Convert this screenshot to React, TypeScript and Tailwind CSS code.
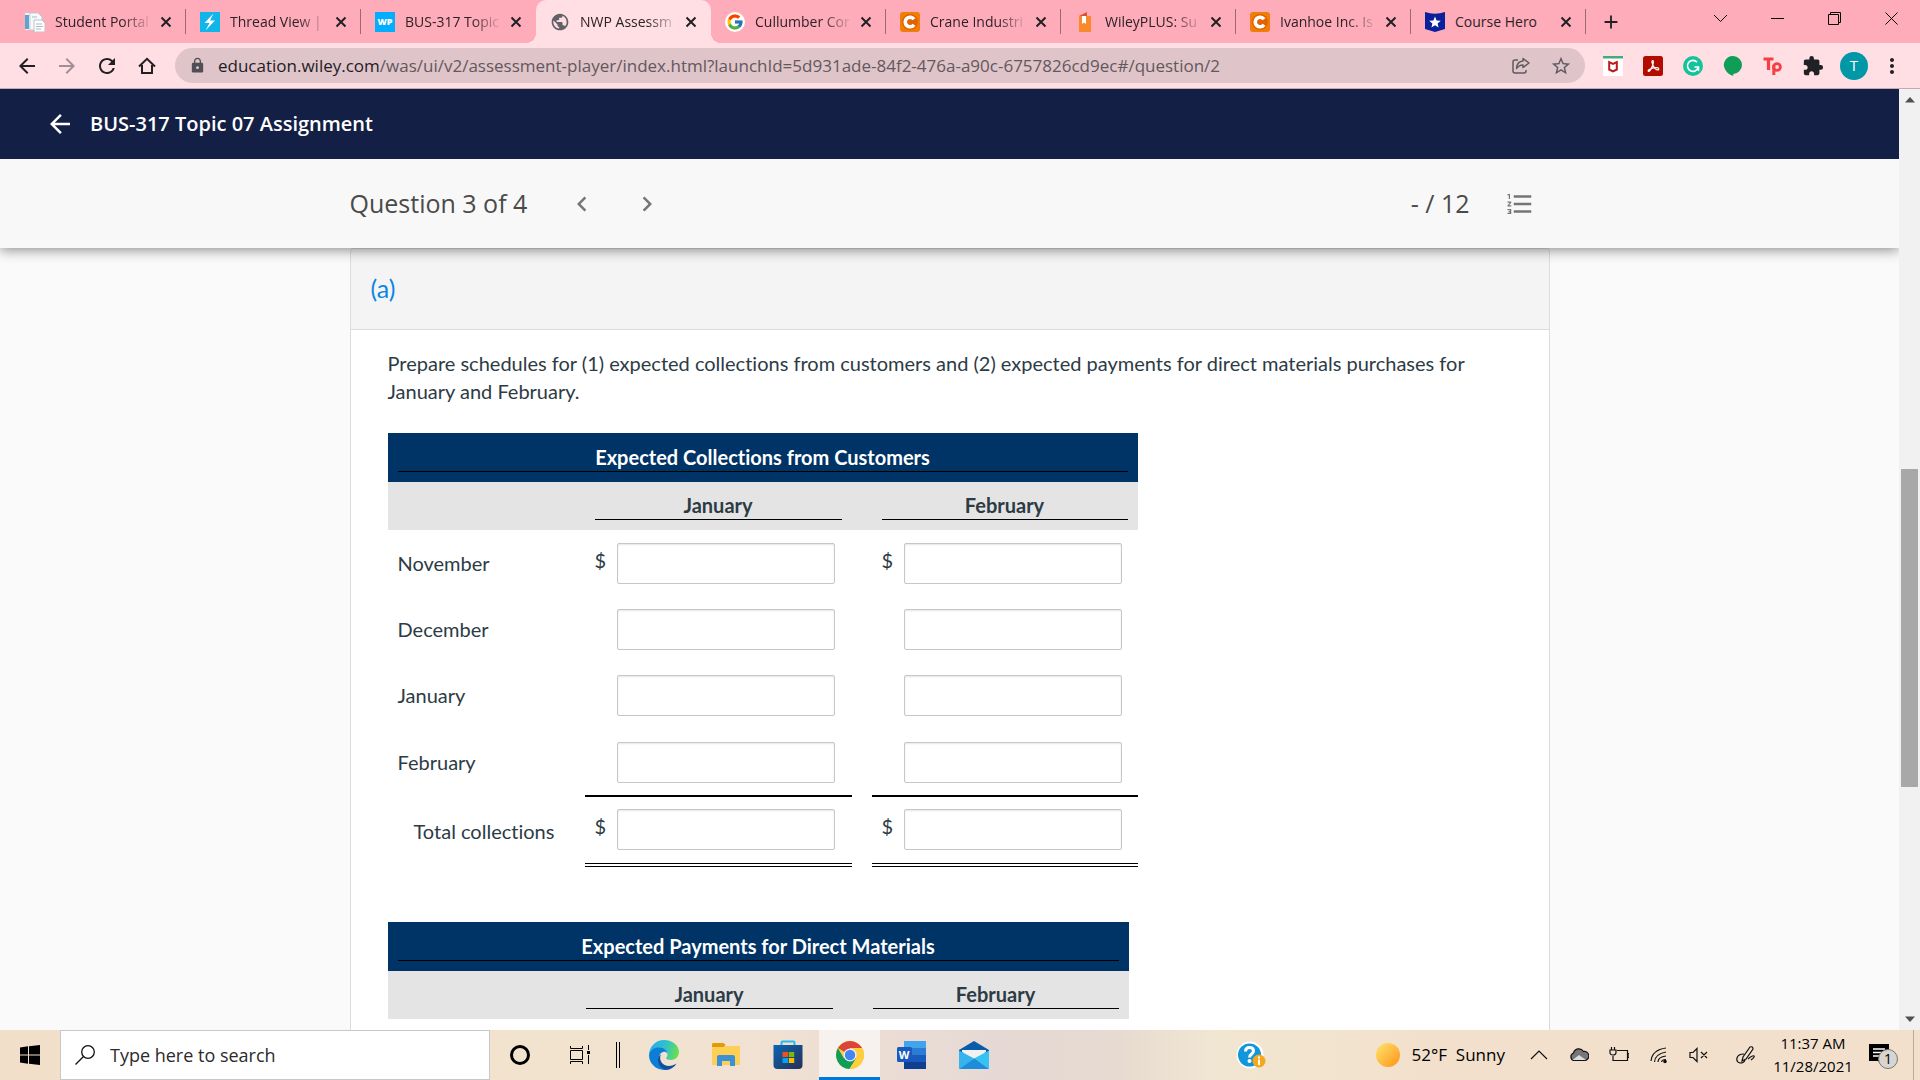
import type { ReactNode } from "react";
import clsx from "clsx";
import { FcGoogle } from "react-icons/fc";
import {
  MdAdd,
  MdArrowBack,
  MdArrowForward,
  MdChevronLeft,
  MdChevronRight,
  MdExtension,
  MdFormatListNumbered,
  MdLock,
  MdMoreVert,
  MdPublic,
  MdRefresh,
  MdStarBorder,
} from "react-icons/md";

const PortalIcon = () => (
  <svg viewBox="0 0 20 20" className="w-5 h-5">
    <path d="M0 1h12v17H0z" fill="#e9f1f6" />
    <path d="M0 3h4v14H0z" fill="#5fa3cf" />
    <path d="M5 1h8l4 4v13H5z" fill="#f7fafb" stroke="#b9c8cf" strokeWidth="0.8" />
    <path d="M9 8h8l3 3v9H9z" fill="#fff" stroke="#a8b7bd" strokeWidth="0.8" />
    <path d="M11 12h6M11 14.500h7M11 17h5M7 5h5" stroke="#9db2bb" strokeWidth="0.9" />
  </svg>
);

const ThreadIcon = () => (
  <svg viewBox="0 0 20 20" className="w-5 h-5">
    <path d="M0 0h20v20H0z" fill="#11b5ea" />
    <path d="M13.500 1.500 4.500 11h5L5.500 18.500 15 8.500h-5z" fill="#fff" />
  </svg>
);

const WpIcon = () => (
  <span className="w-5 h-5 flex items-center justify-center bg-[#04aeff] text-white text-[9px] font-extrabold">
    WP
  </span>
);

const CheggIcon = () => (
  <svg viewBox="0 0 20 20" className="w-5 h-5">
    <rect width="20" height="20" rx="3" fill="#f07d05" />
    <circle cx="10" cy="10" r="8" fill="#e06303" />
    <path d="M14 7.300A4.800 4.800 0 1 0 14 12.700" fill="none" stroke="#fff" strokeWidth="3.600" />
  </svg>
);

const BookIcon = () => (
  <svg viewBox="0 0 20 20" className="w-5 h-5">
    <path d="M4 4 12 0v4z" fill="#d9532c" />
    <path d="M4 4h12v16H4z" fill="#f98a2c" />
    <path d="M7 4h4v8l-2-1.500L7 12z" fill="#fff" />
  </svg>
);

const HeroIcon = () => (
  <svg viewBox="0 0 20 20" className="w-5 h-5">
    <path d="M0 0q10 3.500 20 0v17l-10 3L0 17z" fill="#0a1f9c" />
    <path d="m10 4.500 1.600 3.900 4.200.3-3.200 2.700 1 4.100-3.600-2.200-3.600 2.200 1-4.100-3.200-2.700 4.200-.3z" fill="#fff" />
  </svg>
);

const TabClose = () => (
  <svg viewBox="0 0 12 12" className="w-3 h-3" stroke="#202124" strokeWidth="2">
    <path d="m1.500 1.500 9 9m0-9-9 9" />
  </svg>
);

const tabs: { title: string; icon: ReactNode; active?: boolean }[] = [
  { title: "Student Portal", icon: <PortalIcon /> },
  { title: "Thread View |", icon: <ThreadIcon /> },
  { title: "BUS-317 Topic", icon: <WpIcon /> },
  {
    title: "NWP Assessm",
    icon: <MdPublic className="w-5 h-5 text-[#5f6368]" />,
    active: true,
  },
  {
    title: "Cullumber Cor",
    icon: (
      <span className="w-5 h-5 rounded-full bg-white flex items-center justify-center">
        <FcGoogle className="w-[18px] h-[18px]" />
      </span>
    ),
  },
  { title: "Crane Industri", icon: <CheggIcon /> },
  { title: "WileyPLUS: Su", icon: <BookIcon /> },
  { title: "Ivanhoe Inc. Is", icon: <CheggIcon /> },
  { title: "Course Hero", icon: <HeroIcon /> },
];

const TabStrip = () => (
  <div className="flex h-[43px] bg-[#ffacba] pl-[11px] overflow-hidden">
    <div className="flex flex-1 min-w-0">
      {tabs.map((tab, i) => (
        <div
          key={tab.title}
          className={clsx(
            "relative flex items-center w-[175px] shrink pl-3.5 pr-1.5",
            tab.active && "bg-[#ffdee4] rounded-t-[10px]"
          )}
        >
          <span className="shrink-0">{tab.icon}</span>
          <a
            href="#tab"
            className={clsx(
              "ml-2.5 w-[98px] whitespace-nowrap text-sm text-[#2b2226]",
              tab.title !== "Course Hero" &&
                "[mask-image:linear-gradient(to_right,#000_68%,transparent)]"
            )}
          >
            {tab.title}
          </a>
          <button aria-label={`Close ${tab.title}`} className="ml-[7px] shrink-0">
            <TabClose />
          </button>
          {!tab.active && i !== 2 && (
            <span className="absolute right-0 top-[9px] h-[25px] w-px bg-[#9c6a73]" />
          )}
          {tab.active && (
            <>
              <span className="absolute -left-2.5 bottom-0 w-2.5 h-2.5 bg-[radial-gradient(circle_at_0_0,#ffacba_10px,#ffdee4_10px)]" />
              <span className="absolute -right-2.5 bottom-0 w-2.5 h-2.5 bg-[radial-gradient(circle_at_100%_0,#ffacba_10px,#ffdee4_10px)]" />
            </>
          )}
        </div>
      ))}
      <button aria-label="New tab" className="ml-3.5 text-[#202124]">
        <MdAdd className="w-[22px] h-[22px]" />
      </button>
    </div>
    <div className="flex h-[37px] text-black">
      {[
        ["Search tabs", "m1 4 6.500 6.500L14 4"],
        ["Minimize", "M1 7.500h13"],
        ["Restore", "M1.500 3.500h10v10h-10zM3.500 3.500v-2h10v10h-2"],
        ["Close", "m1.500 1.500 12 12m0-12-12 12"],
      ].map(([label, d]) => (
        <button key={label} aria-label={label} className="w-[57px] flex items-center justify-center">
          <svg viewBox="0 0 15 15" className="w-[15px] h-[15px]" fill="none" stroke="currentColor">
            <path d={d} />
          </svg>
        </button>
      ))}
    </div>
  </div>
);

const extensions: { label: string; icon: ReactNode }[] = [
  {
    label: "McAfee",
    icon: (
      <svg viewBox="0 0 20 20" className="w-5 h-5">
        <path d="M0 0h20v20H0z" fill="#fff" />
        <path d="M0 0h20v2.500H0z" fill="#42ab82" />
        <path d="M6.200 6.200 10 8l3.800-1.800v7.300L10 15.300l-3.800-1.800z" fill="none" stroke="#c01818" strokeWidth="2" />
      </svg>
    ),
  },
  {
    label: "Acrobat",
    icon: (
      <svg viewBox="0 0 20 20" className="w-5 h-5">
        <rect width="20" height="20" rx="2.500" fill="#b30b00" />
        <path
          d="M9.700 4.500c-1.200 0-.8 2.600.2 4.700.9 1.900 3.300 4.600 5 4.600 1.300 0 1.300-1.900-.8-2.100-2.700-.2-6.500.9-7.800 1.700-2 1.300-1.200 2.300-.2 1.800 1.200-.7 2.600-3.300 3.500-5.700.7-2.100 1.200-5 .1-5z"
          fill="none"
          stroke="#fff"
          strokeWidth="1.200"
        />
      </svg>
    ),
  },
  {
    label: "Grammarly",
    icon: (
      <svg viewBox="0 0 20 20" className="w-5 h-5">
        <circle cx="10" cy="10" r="10" fill="#15c39a" />
        <path d="M14 6.100A5.500 5.500 0 1 0 15.200 11.500" fill="none" stroke="#fff" strokeWidth="1.600" />
        <path d="M11.500 11h4v4" fill="none" stroke="#fff" strokeWidth="1.600" />
      </svg>
    ),
  },
  {
    label: "Hangouts",
    icon: (
      <svg viewBox="0 0 20 20" className="w-5 h-5">
        <path d="M10 0a9 9 0 1 1 0 18h.3v2Q5 18.500 2.400 14A9 9 0 0 1 10 0z" fill="#109d58" />
      </svg>
    ),
  },
  {
    label: "Teachers Pay",
    icon: (
      <svg viewBox="0 0 20 20" className="w-5 h-5" fill="none" stroke="#f83e42">
        <path d="M.5 3h10M5.500 3v11" strokeWidth="3.200" />
        <circle cx="14" cy="11" r="3.400" strokeWidth="2.800" />
        <path d="M10.800 9v10" strokeWidth="3" />
      </svg>
    ),
  },
  { label: "Extensions", icon: <MdExtension className="w-[22px] h-[22px] text-[#202124]" /> },
];

const Toolbar = () => (
  <div className="flex items-center h-[46px] bg-[#ffdee4] border-b border-[#c2abb2] pl-[7px] pr-4">
    <button aria-label="Back" className="w-10 flex justify-center text-[#202124]">
      <MdArrowBack className="w-6 h-6" />
    </button>
    <button aria-label="Forward" className="w-10 flex justify-center text-[#a08f95]">
      <MdArrowForward className="w-6 h-6" />
    </button>
    <button aria-label="Reload" className="w-10 flex justify-center text-[#202124]">
      <MdRefresh className="w-6 h-6" />
    </button>
    <button aria-label="Home" className="w-10 flex justify-center">
      <svg viewBox="0 0 18 18" className="w-[18px] h-[18px]" fill="none" stroke="#202124" strokeWidth="2">
        <path d="M1 9.500 9 1.800l8 7.700M4 8v8h10V8" />
      </svg>
    </button>
    <div className="flex flex-1 items-center h-[35px] ml-2 pl-3 pr-3 rounded-full bg-[#dfc4ca]">
      <MdLock className="w-[17px] h-[17px] ml-0.5 mr-3 text-[#4f4f55]" />
      <a href="#address" className="flex-1 whitespace-nowrap text-[17px] text-[#63585c]">
        <span className="text-[#231c1f]">education.wiley.com</span>
        /was/ui/v2/assessment-player/index.html?launchId=5d931ade-84f2-476a-a90c-6757826cd9ec#/question/2
      </a>
      <button aria-label="Share" className="w-10 flex justify-center">
        <svg viewBox="0 0 20 20" className="w-5 h-5" fill="none" stroke="#5f5b60" strokeWidth="1.500">
          <path d="M7 4H4a2 2 0 0 0-2 2v9a2 2 0 0 0 2 2h9a2 2 0 0 0 2-2v-1" />
          <path d="M12 2.500 18 7l-6 4.500V9Q8 9 5.500 12.500 6 5.500 12 5z" strokeLinejoin="round" />
        </svg>
      </button>
      <button aria-label="Bookmark" className="w-10 -mr-2 flex justify-center text-[#5f5b60]">
        <MdStarBorder className="w-[22px] h-[22px]" />
      </button>
    </div>
    <div className="flex items-center ml-2">
      {extensions.map((ext) => (
        <button key={ext.label} aria-label={ext.label} className="w-10 flex justify-center">
          {ext.icon}
        </button>
      ))}
      <button className="w-7 h-7 ml-[7px] rounded-full bg-[#0097a7] text-white text-[15px]">T</button>
      <button aria-label="Menu" className="ml-3 text-[#202124]">
        <MdMoreVert className="w-6 h-6" />
      </button>
    </div>
  </div>
);

const AmountField = ({ label, dollar }: { label: string; dollar?: boolean }) => (
  <label className="flex items-start pl-2.5">
    <span className="w-[22px] pt-[3px] leading-7">{dollar ? "$" : ""}</span>
    <input
      type="text"
      aria-label={label}
      className="w-[218px] h-[41px] px-2 rounded-[2px] border border-[#c7c7c7] bg-white shadow-[inset_0_1px_2px_rgba(0,0,0,0.1)]"
    />
  </label>
);

const ScheduleHead = ({ title }: { title: string }) => (
  <thead>
    <tr className="bg-[#003366] text-white">
      <th colSpan={4} className="p-2.5">
        <div className="border-b border-black leading-7">{title}</div>
      </th>
    </tr>
    <tr className="bg-[#e4e4e4]">
      <td />
      <th className="p-2.5">
        <div className="border-b border-black leading-[27px]">January</div>
      </th>
      <td />
      <th className="p-2.5">
        <div className="border-b border-black leading-[27px]">February</div>
      </th>
    </tr>
  </thead>
);

const rows = [
  { label: "November", dollar: true },
  { label: "December" },
  { label: "January" },
  { label: "February", subtotal: true },
  { label: "Total collections", dollar: true, total: true },
];

const CollectionsTable = () => (
  <table className="table-fixed w-[750px] border-collapse">
    <colgroup>
      <col className="w-[197px]" />
      <col className="w-[267px]" />
      <col className="w-5" />
      <col className="w-[266px]" />
    </colgroup>
    <ScheduleHead title="Expected Collections from Customers" />
    <tbody>
      {rows.map((row) => {
        const cell = clsx(
          "align-top",
          row.total && "pt-3 pb-[13px] border-b-4 border-double border-black",
          row.subtotal && "pt-3.5 pb-3 border-b-2 border-black",
          !row.total && !row.subtotal && "pt-[13px] pb-3"
        );
        return (
          <tr key={row.label}>
            <th scope="row" className={clsx("text-left font-normal", row.total ? "pl-[26px]" : "pl-2.5")}>
              {row.label}
            </th>
            <td className={cell}>
              <AmountField label={`${row.label}, January`} dollar={row.dollar} />
            </td>
            <td />
            <td className={cell}>
              <AmountField label={`${row.label}, February`} dollar={row.dollar} />
            </td>
          </tr>
        );
      })}
    </tbody>
  </table>
);

const PaymentsTable = () => (
  <table className="table-fixed w-[741px] mt-[55px] border-collapse">
    <colgroup>
      <col className="w-[188px]" />
      <col className="w-[267px]" />
      <col className="w-5" />
      <col className="w-[266px]" />
    </colgroup>
    <ScheduleHead title="Expected Payments for Direct Materials" />
  </table>
);

const Page = () => (
  <div className="flex flex-col flex-1 min-w-0 overflow-hidden bg-[#fafafa] font-['Open_Sans',sans-serif]">
    <header className="relative z-10 flex items-center h-[70px] shrink-0 pl-[45px] bg-[#141f45] text-white">
      <button aria-label="Back to course">
        <MdArrowBack className="w-[30px] h-[30px]" />
      </button>
      <h1 className="ml-[15px] text-xl font-semibold">BUS-317 Topic 07 Assignment</h1>
    </header>
    <div className="relative shrink-0 h-[89px] bg-[#f8f8f8] text-[#4a4a4a] shadow-[0_2px_12px_rgba(0,0,0,0.45)]">
      <div className="flex items-center h-full w-full max-w-[1200px] mx-auto">
        <h2 className="text-[25px]">Question 3 of 4</h2>
        <button aria-label="Previous question" className="ml-10 text-[#757575]">
          <MdChevronLeft className="w-[30px] h-[30px]" />
        </button>
        <button aria-label="Next question" className="ml-[35px] text-[#757575]">
          <MdChevronRight className="w-[30px] h-[30px]" />
        </button>
        <span className="ml-auto text-[25px]">- / 12</span>
        <button aria-label="Question list" className="ml-[35px] mr-[15px] text-[#757575]">
          <MdFormatListNumbered className="w-[30px] h-[30px]" />
        </button>
      </div>
    </div>
    <main className="flex-1 min-h-0 w-full max-w-[1200px] mx-auto overflow-hidden rounded-t border-x border-t border-[#dcdcdc] bg-white font-['Lato',sans-serif] text-[#2d3b45] [font-variant-ligatures:none]">
      <h3 className="h-[81px] flex items-center pl-5 bg-[#f4f4f4] border-b border-[#dcdcdc] text-[25px] text-[#0b87e3]">
        (a)
      </h3>
      <div className="pl-[37px] pr-9 pt-[19px] text-xl">
        <p className="mb-7 leading-7">
          Prepare schedules for (1) expected collections from customers and (2) expected payments for direct
          materials purchases for January and February.
        </p>
        <CollectionsTable />
        <PaymentsTable />
      </div>
    </main>
  </div>
);

const ScrollBar = () => (
  <div className="flex flex-col items-center w-[21px] py-2 bg-[#f1f1f1]">
    <svg viewBox="0 0 10 6" className="w-2.5 h-1.5" fill="#505050">
      <path d="M5 0 10 5.500H0z" />
    </svg>
    <div className="grow-[8]" />
    <div className="w-[17px] h-[318px] bg-[#a8a8a8]" />
    <div className="grow-[5]" />
    <svg viewBox="0 0 10 6" className="w-2.5 h-1.5" fill="#505050">
      <path d="M0 .5h10L5 6z" />
    </svg>
  </div>
);

const EdgeIcon = () => (
  <svg viewBox="0 0 30 30" className="w-[30px] h-[30px]">
    <defs>
      <linearGradient id="edgeTop" x1="0" y1="0.300" x2="1" y2="0.500">
        <stop offset="0" stopColor="#2aa9ee" />
        <stop offset="0.550" stopColor="#2fc3c9" />
        <stop offset="1" stopColor="#6be04a" />
      </linearGradient>
    </defs>
    <path d="M0 15A15 15 0 0 1 15 0c9 0 15 6 15 12 0 5-4 8-8 8-3 0-5-1-5-2 1-1 1.500-2 1.500-3.500C18.500 11 15 8 10.500 8 5 8 1 11 0 15z" fill="url(#edgeTop)" />
    <path d="M0 15c1-5 5-7.500 10-7.500 5 0 8 3 8.500 6-1-1.500-3-2-4.500-1.500-3 1-4.500 4-4 8 .7 5 4 8.500 9 9.300-1.300.5-2.700.7-4 .7A15 15 0 0 1 0 15z" fill="#0c7ed6" />
    <path d="M12 14.500c-1.500 2.500-1 6 1 8.500 3.500 4 10 3.500 14.500.500C25.500 27 21.500 30 17 30c-5-1-8-6-8-10 0-2.500 1-4.500 3-5.500z" fill="#144f9f" />
  </svg>
);

const FolderIcon = () => (
  <svg viewBox="0 0 28 24" className="w-7 h-6">
    <path d="M0 1.500Q0 0 1.500 0h10L13.500 3H28v19H0z" fill="#fdcf55" />
    <path d="M0 1.500Q0 0 1.500 0h10l2 2-2 2H0z" fill="#e19a08" />
    <path d="M5 14q0-2 2-2h14q2 0 2 2v9h-5v-5h-8v5H5z" fill="#3b91d4" />
  </svg>
);

const StoreIcon = () => (
  <svg viewBox="0 0 30 30" className="w-[30px] h-[30px]">
    <defs>
      <linearGradient id="storeBag" x1="0" y1="0" x2="1" y2="1">
        <stop offset="0" stopColor="#0a66b2" />
        <stop offset="1" stopColor="#262f58" />
      </linearGradient>
    </defs>
    <path d="M8.500 6V2.500a1 1 0 0 1 1-1h11a1 1 0 0 1 1 1V6" fill="none" stroke="#2bb8f0" strokeWidth="2" />
    <path d="M.5 5h29v20a4 4 0 0 1-4 4h-21a4 4 0 0 1-4-4z" fill="url(#storeBag)" />
    <path d="M9.500 12H15v5H9.500z" fill="#f25022" />
    <path d="M15.800 12h5.400v5h-5.400z" fill="#7fba00" />
    <path d="M9.500 18H15v5H9.500z" fill="#00a4ef" />
    <path d="M15.800 18h5.400v5h-5.400z" fill="#ffb900" />
  </svg>
);

const ChromeIcon = () => (
  <svg viewBox="0 0 28 28" className="w-7 h-7">
    <circle cx="14" cy="14" r="14" fill="#ffcd40" />
    <path d="M14 14 1.900 7A14 14 0 0 1 26.100 7H14z" fill="#db4437" />
    <path d="M1.900 7A14 14 0 0 0 13.500 28l6.500-10.500-6-3.500-6 3.500z" fill="#0f9d58" />
    <path d="m20 17.500-6.500 10.500A14 14 0 0 0 26.100 7H14z" fill="#ffcd40" />
    <circle cx="14" cy="14" r="6.500" fill="#f1f1f1" />
    <circle cx="14" cy="14" r="5.200" fill="#4285f4" />
  </svg>
);

const WordIcon = () => (
  <span className="relative block w-[30px] h-7">
    <svg viewBox="0 0 30 28" className="w-[30px] h-7">
      <path d="M7 0h22v7H7z" fill="#41a5ee" />
      <path d="M7 7h22v7H7z" fill="#2b7cd3" />
      <path d="M7 14h22v7H7z" fill="#185abd" />
      <path d="M7 21h22v7H7z" fill="#103f91" />
      <rect y="6" width="15" height="15" rx="1.500" fill="#185abd" />
    </svg>
    <span className="absolute left-0 top-1.5 w-[15px] text-center text-[11px] leading-[15px] font-bold text-white">
      W
    </span>
  </span>
);

const MailIcon = () => (
  <svg viewBox="0 0 30 28" className="w-[30px] h-7">
    <path d="M0 9 15 0l15 9v3H0z" fill="#0a5ba8" />
    <path d="M3 9h24v2L15 19 3 11z" fill="#f2f2f2" />
    <path d="M0 9.500 16 18 0 28z" fill="#35b4ee" />
    <path d="M30 9.500V28L15 17.500z" fill="#35c3f3" />
    <path d="M0 28h30L15.500 17.500z" fill="#1b8ddb" />
  </svg>
);

const pinned = [
  { label: "Edge", icon: <EdgeIcon /> },
  { label: "File Explorer", icon: <FolderIcon /> },
  { label: "Store", icon: <StoreIcon /> },
  { label: "Chrome", icon: <ChromeIcon />, active: true },
  { label: "Word", icon: <WordIcon /> },
  { label: "Mail", icon: <MailIcon /> },
];

const trayIcons: { label: string; icon: ReactNode }[] = [
  { label: "Show hidden icons", icon: <path d="m2 14 8-8 8 8" /> },
  {
    label: "OneDrive",
    icon: (
      <>
        <path d="M4.500 15.500a4 4 0 0 1 0-7.500 5.500 5.500 0 0 1 10-1.500 4.500 4.500 0 0 1 1.500 9z" fill="#777" />
        <path d="m3.500 15 6.500-5 7 5z" fill="#ddd" stroke="none" />
      </>
    ),
  },
  {
    label: "Battery",
    icon: <path d="M8 5.500h10.500v10H4V11M18.500 8.500H20v4h-1.500M2.500 2v3m3-3v3M1 5h6v2.500q0 2.500-3 2.500T1 7.500z" />,
  },
  {
    label: "Wi-Fi",
    icon: (
      <>
        <path d="M2 16Q3 5 17 3M5.500 17Q6 9 17 7M9 17q0-5 8-6M12.500 17q.5-2.500 4.500-2.500" />
        <circle cx="16" cy="16.500" r="1.200" fill="#000" />
      </>
    ),
  },
  { label: "Volume muted", icon: <path d="M1 7.500h3l4-4v13l-4-4H1zM12 7l6 6m0-6-6 6" /> },
  {
    label: "Windows Ink",
    icon: <path d="M7 16 8 12 15 2q3-1 3 2l-7 10zM9 9q-6 0-7 4t3 5q4 0 5-3m3-1q5-4 6-3t-3 4" />,
  },
];

const TaskBar = () => (
  <footer className="flex h-[50px] shrink-0 bg-[linear-gradient(to_right,#f1dfca,#f2e3cf_30%,#f0e1d3_40%,#e6d9d5_52%,#e6dad1_58%,#f1e6d2_63%,#f2e4ce_69%,#f2e0cd_74%,#f2e0cd)]">
    <button aria-label="Start" className="w-[60px] flex items-center justify-center">
      <svg viewBox="0 0 20 20" className="w-5 h-5" fill="#000">
        <path d="M0 2.500 8 1.300V9.500H0zM9 1.200 20 0v9.500H9zM0 10.500h8v8.200L0 17.500zM9 10.500h11V20L9 18.800z" />
      </svg>
    </button>
    <label className="flex items-center w-[430px] px-3.5 border border-[#c8c8c8] bg-white">
      <svg viewBox="0 0 20 20" className="w-5 h-5" fill="none" stroke="#111" strokeWidth="1.300">
        <circle cx="13" cy="7" r="6.300" />
        <path d="M8.500 11.500.5 19.500" />
      </svg>
      <input
        type="text"
        aria-label="Search"
        placeholder="Type here to search"
        className="flex-1 ml-[15px] text-lg placeholder:text-[#2b2b2b] outline-none"
      />
    </label>
    <button aria-label="Cortana" className="w-[60px] flex items-center justify-center">
      <span className="w-5 h-5 rounded-full border-[3px] border-black" />
    </button>
    <button aria-label="Task view" className="w-[60px] flex items-center justify-center">
      <svg viewBox="0 0 20 20" className="w-5 h-5" fill="none" stroke="#000">
        <path d="M.5 5.500h12v9H.5zM.5 1v2.500h12V1M.5 19v-2.500h12V19M18.500 0v5M18.500 10v9" />
        <path d="M17 6h3v3h-3z" fill="#000" stroke="none" />
      </svg>
    </button>
    <span className="self-center w-1 h-[26px] ml-1.5 mr-[13px] border-x border-black" />
    <div className="flex gap-px">
      {pinned.map((app) => (
        <button
          key={app.label}
          aria-label={app.label}
          className={clsx(
            "w-[61px] flex items-center justify-center",
            app.active && "bg-[#f7f2ed] border-b-[3px] border-[#0078d7] pt-[3px]"
          )}
        >
          {app.icon}
        </button>
      ))}
    </div>
    <div className="flex items-center ml-auto text-black">
      <button aria-label="Get help" className="mr-[110px]">
        <svg viewBox="0 0 30 28" className="w-[30px] h-7">
          <circle cx="14" cy="14" r="13.500" fill="#fff" />
          <circle cx="13.500" cy="14" r="11.500" fill="#1296db" />
          <path d="M9.500 10.500q0-4 4-4t4 3.500c0 3-4 3-4 6.500" fill="none" stroke="#fff" strokeWidth="3" />
          <circle cx="13.500" cy="20" r="2" fill="#fff" />
          <circle cx="23" cy="20" r="6.500" fill="#f5a81c" />
          <path d="M23 18.500V24M23 15.500v2" stroke="#fff" strokeWidth="2" />
        </svg>
      </button>
      <button className="flex items-center whitespace-pre text-[17px]">
        <span className="w-6 h-6 mr-3 rounded-full bg-linear-to-br from-[#ffe368] to-[#ff9300]" />
        52°F  Sunny
      </button>
      <div className="flex ml-3.5">
        {trayIcons.map((item) => (
          <button key={item.label} aria-label={item.label} className="w-10 flex justify-center last:ml-1.5">
            <svg viewBox="0 0 20 20" className="w-5 h-5" fill="none" stroke="#111" strokeWidth="1.200">
              {item.icon}
            </svg>
          </button>
        ))}
      </div>
      <button className="w-24 text-center text-[15px] leading-[23px]">
        11:37 AM
        <br />
        11/28/2021
      </button>
      <button aria-label="Notifications" className="relative w-8 h-[30px] ml-2">
        <svg viewBox="0 0 20 22" className="w-5 h-[22px]">
          <path d="M0 0h20v17h-6v5l-5-5H0z" fill="#000" />
          <path d="M4 5h12M4 8.500h12M4 12h8" stroke="#fff" strokeWidth="1.300" />
        </svg>
        <span className="absolute left-[9px] top-[9px] w-5 h-5 rounded-full border border-[#777] bg-[#d8d4d0] text-[14px] leading-[18px]">
          1
        </span>
      </button>
      <span className="w-px h-[50px] ml-3 mr-1.5 bg-[#b9ab9e]" />
    </div>
  </footer>
);

const App = () => {
  return (
    <div className="flex flex-col h-screen overflow-hidden font-['Open_Sans',sans-serif]">
      <TabStrip />
      <Toolbar />
      <div className="flex flex-1 min-h-0">
        <Page />
        <ScrollBar />
      </div>
      <TaskBar />
    </div>
  );
};

export default App;
